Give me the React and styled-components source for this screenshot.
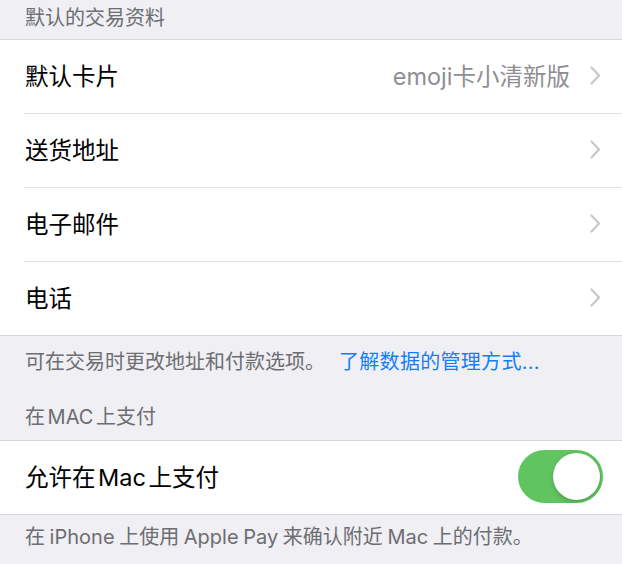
import React from "react";
import styled, { createGlobalStyle } from "styled-components";

const Global = createGlobalStyle`
  html, body { margin: 0; padding: 0; background: #efeff4; }
  body { font-family: "Inter", "Noto Sans CJK SC", sans-serif; -webkit-font-smoothing: antialiased; }
`;

const Page = styled.div`
  width: 622px;
  min-height: 564px;
  background: #efeff4;
  overflow: hidden;
`;

const SectionHeader = styled.div`
  padding: ${(p) => p.$pt}px 25px ${(p) => p.$pb}px;
  font-size: 20px;
  line-height: 24px;
  color: #6d6d72;
  word-spacing: -3px;
`;

const SectionFooter = styled.div`
  padding: ${(p) => p.$pt}px 25px ${(p) => p.$pb}px;
  font-size: 20px;
  line-height: 24px;
  color: #6d6d72;
  white-space: nowrap;
  word-spacing: -1px;
`;

const Link = styled.span`
  color: #157efb;
  margin-left: 14px;
  letter-spacing: 0.3px;
`;

const Group = styled.div`
  background: #fff;
  border-top: 1px solid #d8d8dc;
  border-bottom: 1px solid #d8d8dc;
`;

const Row = styled.div`
  display: flex;
  align-items: center;
  height: 73px;
  margin-left: 24px;
  padding-right: ${(p) => p.$pr}px;
  border-bottom: ${(p) => (p.$last ? "none" : "1px solid #e0e0e4")};
`;

const Label = styled.div`
  flex: 1;
  font-size: 23.5px;
  color: #000;
  padding: 0 0 3px 1px;
  word-spacing: -4px;
`;

const Value = styled.div`
  font-size: 23.5px;
  color: #8e8e93;
  margin-right: 20px;
  padding-bottom: 3px;
`;

const Toggle = styled.div`
  position: relative;
  width: 85px;
  height: 53px;
  border-radius: 27px;
  background: #60c460;
  margin-top: -3px;
`;

const Knob = styled.div`
  position: absolute;
  top: 3px;
  right: 3px;
  width: 47px;
  height: 47px;
  border-radius: 50%;
  background: #fff;
  box-shadow: 0 2px 4px rgba(0, 0, 0, 0.18), 0 0 1px rgba(0, 0, 0, 0.15);
`;

const Chevron = () => (
  <svg width="11" height="19" viewBox="0 0 11 19" style={{ marginTop: -3 }}>
    <path d="M1.5 1.5 L9 9.5 L1.5 17.5" fill="none" stroke="#c7c7cc" strokeWidth="2.2" strokeLinecap="round" strokeLinejoin="round" />
  </svg>
);

const items = [
  { label: "默认卡片", value: "emoji卡小清新版" },
  { label: "送货地址" },
  { label: "电子邮件" },
  { label: "电话" },
];

export default function App() {
  return (
    <Page>
      <Global />
      <SectionHeader $pt={6} $pb={9}>默认的交易资料</SectionHeader>
      <Group>
        {items.map((it, i) => (
          <Row key={it.label} $pr={21} $last={i === items.length - 1}>
            <Label>{it.label}</Label>
            {it.value && <Value>{it.value}</Value>}
            <Chevron />
          </Row>
        ))}
      </Group>
      <SectionFooter $pt={14} $pb={0}>
        可在交易时更改地址和付款选项。<Link>了解数据的管理方式...</Link>
      </SectionFooter>
      <SectionHeader $pt={31} $pb={11}>在 MAC 上支付</SectionHeader>
      <Group>
        <Row $pr={19} $last>
          <Label>允许在 Mac 上支付</Label>
          <Toggle>
            <Knob />
          </Toggle>
        </Row>
      </Group>
      <SectionFooter $pt={10} $pb={16}>
        在 iPhone 上使用 Apple Pay 来确认附近 Mac 上的付款。
      </SectionFooter>
    </Page>
  );
}
